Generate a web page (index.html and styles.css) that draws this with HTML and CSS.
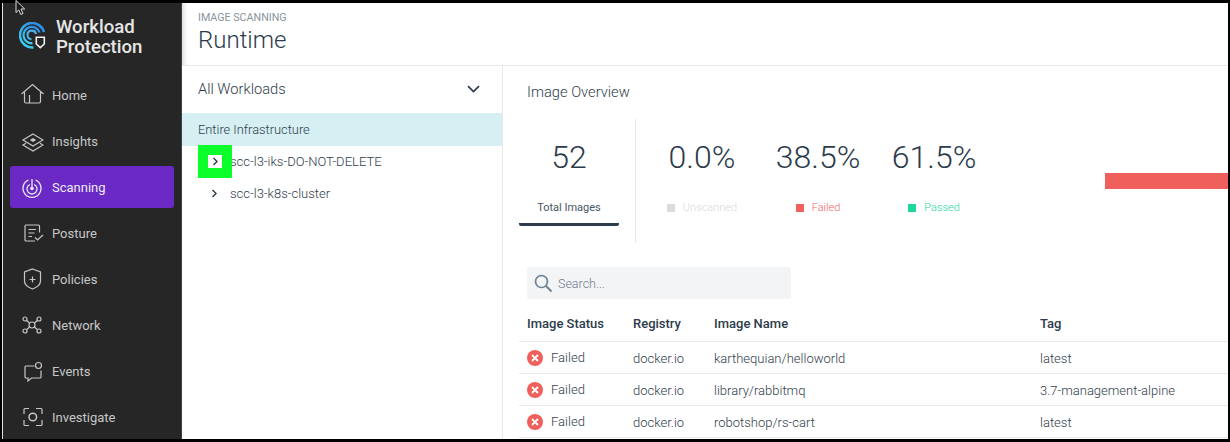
FILE: index.html
```html
<!DOCTYPE html>
<html lang="en">
<head>
<meta charset="utf-8">
<title>Workload Protection - Runtime</title>
<link rel="stylesheet" href="styles.css">
</head>
<body>
<div class="frame">
  <aside class="sidebar">
    <div class="brand">
      <svg class="logo" width="27" height="27" viewBox="0 0 27 27" fill="none">
        <defs><linearGradient id="lg" x1="0.8" y1="0" x2="0.2" y2="1"><stop offset="0" stop-color="#2f8ae6"/><stop offset="1" stop-color="#3fd2f2"/></linearGradient></defs>
        <path d="M25 10A12.200 12.200 0 1 0 14.500 25.400" stroke="url(#lg)" stroke-width="2.500"/>
        <path d="M20.500 10.500A8.200 8.200 0 1 0 13.500 21.200" stroke="url(#lg)" stroke-width="2.300"/>
        <path d="M17 12A4.300 4.300 0 1 0 12.500 17.200" stroke="#48b4ea" stroke-width="2.100"/>
        <path d="M17.300 15.200h8v6.800l-4 3.600-4-3.600z" stroke="#f2f2f2" stroke-width="1.600" fill="#262626"/>
      </svg>
      <div class="brand-name">Workload<br>Protection</div>
    </div>
    <nav class="nav">
      <a class="nav-item">
        <svg class="nav-icon" width="24" height="24" viewBox="0 0 24 24" fill="none"><path d="M1.500 11 12.500 1.500 23.500 11M4.500 9v9.500a1.500 1.500 0 0 0 1.500 1.500h13a1.500 1.500 0 0 0 1.500-1.500V9M9.500 20v-8" stroke="currentColor" stroke-width="1.200"/></svg>
        <span>Home</span>
      </a>
      <a class="nav-item">
        <svg class="nav-icon" width="24" height="24" viewBox="0 0 24 24" fill="none"><path d="M13 5 23 11 13 17 3 11zM6 14.300 3 16 13 22l10-6-3-1.700" stroke="currentColor" stroke-width="1.200"/><path d="M13 9l3.200 2-3.200 2-3.200-2z" fill="currentColor"/></svg>
        <span>Insights</span>
      </a>
      <a class="nav-item active">
        <svg class="nav-icon" width="24" height="24" viewBox="0 0 24 24" fill="none"><path d="M8.500 5a9 9 0 1 0 7 0M9.800 9.500a5 5 0 1 0 4.400 0" stroke="currentColor" stroke-width="1.300"/><path d="M12 4v9" stroke="currentColor" stroke-width="1.300"/><circle cx="12" cy="13.500" r="1.800" fill="currentColor"/></svg>
        <span>Scanning</span>
      </a>
      <a class="nav-item">
        <svg class="nav-icon" width="24" height="24" viewBox="0 0 24 24" fill="none"><path d="M19.500 11.500V5a1 1 0 0 0-1-1H6a1 1 0 0 0-1 1v14a1 1 0 0 0 1 1h9M8.500 8.500h7.500M8.500 12h6M8.500 15.500h3.500M15 16.500l2.500 2.500 5.500-5" stroke="currentColor" stroke-width="1.200"/></svg>
        <span>Posture</span>
      </a>
      <a class="nav-item">
        <svg class="nav-icon" width="24" height="24" viewBox="0 0 24 24" fill="none"><path d="M12.500 2 20.500 5v9c0 4-4 6.500-8 8-4-1.500-8-4-8-8V5zM12.500 9.500v6M9.500 12.500h6" stroke="currentColor" stroke-width="1.200"/></svg>
        <span>Policies</span>
      </a>
      <a class="nav-item">
        <svg class="nav-icon" width="24" height="24" viewBox="0 0 24 24" fill="none" stroke="currentColor" stroke-width="1.200"><circle cx="12" cy="12" r="3"/><circle cx="5" cy="6" r="2"/><circle cx="19" cy="6" r="2"/><circle cx="5" cy="18" r="2"/><circle cx="19" cy="18" r="2"/><path d="M6.500 7.300 9.500 10M17.500 7.300 14.500 10M6.500 16.700 9.500 14M17.500 16.700 14.500 14"/></svg>
        <span>Network</span>
      </a>
      <a class="nav-item">
        <svg class="nav-icon" width="24" height="24" viewBox="0 0 24 24" fill="none" stroke="currentColor" stroke-width="1.200"><path d="M14.500 7H6a1 1 0 0 0-1 1v10a1 1 0 0 0 1 1h2v3l3.500-3H20a1 1 0 0 0 1-1v-6.500"/><circle cx="18.500" cy="6.500" r="3"/></svg>
        <span>Events</span>
      </a>
      <a class="nav-item">
        <svg class="nav-icon" width="24" height="24" viewBox="0 0 24 24" fill="none" stroke="currentColor" stroke-width="1.200"><path d="M9 3.500H5a1 1 0 0 0-1 1V9M16 3.500h5a1 1 0 0 1 1 1V9M9 20.500H5a1 1 0 0 1-1-1V15M16 20.500h5a1 1 0 0 0 1-1V15"/><circle cx="12.800" cy="12" r="3.800" stroke-width="1.500"/></svg>
        <span>Investigate</span>
      </a>
    </nav>
  </aside>

  <main class="main">
    <header class="page-head">
      <div class="eyebrow">IMAGE SCANNING</div>
      <h1 class="page-title">Runtime</h1>
    </header>
    <div class="content">
      <section class="tree">
        <div class="tree-head">
          <span>All Workloads</span>
          <svg width="13" height="8" viewBox="0 0 13 8" fill="none"><path d="M1 1.200 6.500 6.500 12 1.200" stroke="#2d3b4a" stroke-width="1.700"/></svg>
        </div>
        <div class="tree-root">Entire Infrastructure</div>
        <div class="tree-row">
          <span class="focus-mark"><svg width="7" height="9" viewBox="0 0 7 9" fill="none"><path d="M1.500 1 5 4.500 1.500 8" stroke="#2d3b4a" stroke-width="1.400"/></svg></span>
          <span>scc-l3-iks-DO-NOT-DELETE</span>
        </div>
        <div class="tree-row">
          <span class="chev"><svg width="7" height="9" viewBox="0 0 7 9" fill="none"><path d="M1.500 1 5 4.500 1.500 8" stroke="#2d3b4a" stroke-width="1.400"/></svg></span>
          <span>scc-l3-k8s-cluster</span>
        </div>
      </section>

      <section class="overview">
        <h2 class="overview-title">Image Overview</h2>
        <div class="stats">
          <div class="total">
            <div class="num">52</div>
            <div class="total-label">Total Images</div>
          </div>
          <div class="stat-divider"></div>
          <div class="stat">
            <div class="num">0.0%</div>
            <div class="legend unscanned"><i class="sq"></i>Unscanned</div>
          </div>
          <div class="stat">
            <div class="num">38.5%</div>
            <div class="legend failed"><i class="sq"></i>Failed</div>
          </div>
          <div class="stat">
            <div class="num">61.5%</div>
            <div class="legend passed"><i class="sq"></i>Passed</div>
          </div>
          <div class="chart-bar"></div>
        </div>
        <div class="search">
          <svg width="20" height="20" viewBox="0 0 20 20" fill="none"><circle cx="8.500" cy="8.500" r="6" stroke="#6f8292" stroke-width="1.700"/><path d="m13 13 5.500 5.500" stroke="#6f8292" stroke-width="1.900"/></svg>
          <span>Search...</span>
        </div>
        <table class="images">
          <thead>
            <tr><th class="c-status">Image Status</th><th class="c-reg">Registry</th><th class="c-name">Image Name</th><th>Tag</th></tr>
          </thead>
          <tbody>
            <tr>
              <td><span class="status"><svg width="16" height="16" viewBox="0 0 16 16"><circle cx="8" cy="8" r="8" fill="#ef5f5c"/><path d="m5 5 6 6m0-6-6 6" stroke="#fff" stroke-width="1.800"/></svg>Failed</span></td>
              <td>docker.io</td><td>karthequian/helloworld</td><td>latest</td>
            </tr>
            <tr>
              <td><span class="status"><svg width="16" height="16" viewBox="0 0 16 16"><circle cx="8" cy="8" r="8" fill="#ef5f5c"/><path d="m5 5 6 6m0-6-6 6" stroke="#fff" stroke-width="1.800"/></svg>Failed</span></td>
              <td>docker.io</td><td>library/rabbitmq</td><td>3.7-management-alpine</td>
            </tr>
            <tr>
              <td><span class="status"><svg width="16" height="16" viewBox="0 0 16 16"><circle cx="8" cy="8" r="8" fill="#ef5f5c"/><path d="m5 5 6 6m0-6-6 6" stroke="#fff" stroke-width="1.800"/></svg>Failed</span></td>
              <td>docker.io</td><td>robotshop/rs-cart</td><td>latest</td>
            </tr>
          </tbody>
        </table>
      </section>
    </div>
  </main>

  <svg class="cursor" width="12" height="16" viewBox="0 0 12 16"><path d="M1 .5v12l2.800-2.600 2 4.600 2.200-1-2-4.500h3.700z" fill="#1a1a1a" stroke="#dcdcdc" stroke-width="1"/></svg>
</div>
</body>
</html>
```

FILE: styles.css
```css
* { box-sizing: border-box; }

html, body { margin: 0; height: 100%; }

body {
  background: #000;
  padding: 3px 2px 3px 2px;
  overflow: hidden;
  font-family: Roboto, "Liberation Sans", sans-serif;
  color: #3f4b57;
}

.frame {
  position: relative;
  display: flex;
  height: 436px;
  background: #fff;
  border-left: 1px solid #e4e4e4;
}

/* Sidebar */
.sidebar {
  flex: none;
  width: 179px;
  background: #262626;
  border-right: 1px solid #38424c;
  padding: 14px 7px 0 7px;
}

.brand {
  display: flex;
  gap: 10px;
  height: 57px;
  padding-left: 9px;
}

.logo { flex: none; margin-top: 5px; }

.brand-name {
  font-size: 18.600px;
  line-height: 20px;
  font-weight: 500;
  color: #e6e6e6;
}

.nav { display: flex; flex-direction: column; gap: 4px; }

.nav-item {
  display: flex;
  align-items: center;
  gap: 8px;
  height: 42px;
  padding-left: 10px;
  border-radius: 3px;
  color: #c6c6c6;
  font-size: 13px;
}

.nav-item.active { background: #6a28c4; color: #ececf5; }

.nav-icon { flex: none; }

/* Main */
.main { flex: 1; min-width: 0; display: flex; flex-direction: column; }

.page-head {
  height: 63px;
  border-bottom: 1px solid #e9e9e9;
  padding: 8px 16px 0;
  box-shadow: inset 6px 0 6px -6px #bbb;
}

.eyebrow { font-size: 10.700px; line-height: 13px; color: #8a939c; }

.page-title {
  margin: 1px 0 0;
  font-size: 24px;
  line-height: 30px;
  font-weight: 300;
  color: #2c3b4b;
}

.content { flex: 1; display: flex; min-height: 0; }

/* Tree */
.tree {
  flex: none;
  width: 321px;
  border-right: 1px solid #e9e9e9;
}

.tree-head {
  display: flex;
  justify-content: space-between;
  align-items: center;
  height: 47px;
  padding: 0 22px 2px 16px;
  font-size: 14.700px;
  font-weight: 300;
  color: #2f3d4b;
}

.tree-root {
  height: 33px;
  line-height: 33px;
  padding-left: 16px;
  background: #d6eff3;
  font-size: 12.850px;
  font-weight: 300;
  color: #2f3d4b;
}

.tree-row {
  display: flex;
  align-items: center;
  height: 32px;
  padding: 0 0 2px 48px;
  position: relative;
  font-size: 13px;
  font-weight: 300;
  color: #2f3d4b;
}

.chev {
  position: absolute;
  left: 29px;
  top: 11px;
  line-height: 0;
}

.focus-mark {
  position: absolute;
  left: 16px;
  top: -1px;
  width: 34px;
  height: 33px;
  border: 10px solid #0cff2a;
  background: #fff;
  display: flex;
  align-items: center;
  justify-content: center;
}

/* Overview */
.overview { flex: 1; min-width: 0; padding-top: 17px; }

.overview-title {
  margin: 0 0 0 24px;
  font-size: 14.700px;
  line-height: 18px;
  font-weight: 300;
  color: #2f3d4b;
}

.stats {
  display: flex;
  height: 124px;
  margin: 18px 0 24px 16px;
}

.total { flex: none; width: 100px; text-align: center; }

.num {
  font-size: 32px;
  line-height: 38px;
  margin-top: 19px;
  font-weight: 300;
  color: #2c3b4b;
}

.total-label {
  margin-top: 25px;
  padding-bottom: 8px;
  font-size: 11px;
  line-height: 14px;
  color: #4b5662;
  border-bottom: 3px solid #2c3b4b;
  border-radius: 0 0 2px 2px;
}

.stat-divider { flex: none; width: 1px; margin-left: 16px; background: #e9e9e9; }

.stat { flex: none; width: 116px; text-align: center; }

.stat-divider + .stat { margin-left: 8px; }

.legend {
  display: flex;
  justify-content: center;
  align-items: center;
  gap: 8px;
  margin-top: 25px;
  font-size: 11px;
  line-height: 14px;
  font-weight: 300;
}

.sq { display: block; width: 8px; height: 8px; }

.unscanned { color: #d8d8d8; }
.unscanned .sq { background: #dcdcdc; }
.failed { color: #f0625f; }
.failed .sq { background: #ef5f5c; }
.passed { color: #1fd89d; }
.passed .sq { background: #1fd89d; }

.chart-bar {
  flex: none;
  margin-left: auto;
  margin-top: 54px;
  width: 123px;
  height: 16px;
  background: #ef5f5c;
}

.search {
  display: flex;
  align-items: center;
  gap: 5px;
  width: 264px;
  height: 32px;
  margin-left: 24px;
  padding-left: 6px;
  border-radius: 2px;
  background: #f3f4f6;
  font-size: 12.500px;
  font-weight: 300;
  color: #6f7e8c;
}

.images {
  width: 709px;
  margin: 9px 0 0 16px;
  border-collapse: collapse;
  table-layout: fixed;
  font-size: 13px;
}

.images th {
  height: 33px;
  padding: 0 0 2px 8px;
  text-align: left;
  font-weight: 500;
  color: #2c3b4b;
}

.images td {
  height: 32px;
  padding: 2px 0 0 8px;
  font-weight: 300;
  color: #2f3d4b;
}

.images tr { border-bottom: 1px solid #e9e9e9; }

.c-status { width: 106px; }
.c-reg { width: 81px; }
.c-name { width: 326px; }

.status { display: flex; align-items: center; gap: 8px; margin-top: -2px; }

.status svg { transform: translateY(1px); }

/* Pointer caught in the capture */
.cursor { position: absolute; left: 12px; top: -3px; }
```
